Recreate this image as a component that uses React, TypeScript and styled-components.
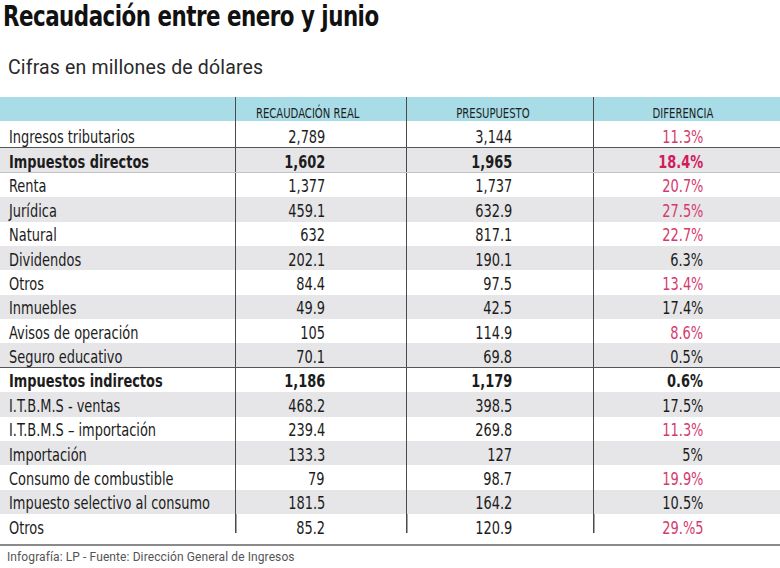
import React from "react";
import styled, { createGlobalStyle } from "styled-components";

const Global = createGlobalStyle`
  html, body { margin: 0; padding: 0; background: #fff; }
  body { width: 780px; height: 568px; overflow: hidden; }
`;

const COND = `"DejaVu Sans Condensed", "Liberation Sans Narrow", "Liberation Sans", sans-serif`;

const Page = styled.div`
  width: 780px;
  height: 568px;
  display: flex;
  flex-direction: column;
  background: #fff;
  color: #1c1c1c;
`;

const Title = styled.h1`
  margin: 0;
  padding: 1px 0 0 3px;
  height: 35px;
  box-sizing: border-box;
  font-family: ${COND};
  font-weight: 700;
  font-size: 28px;
  line-height: 32px;
  letter-spacing: -0.6px;
  color: #111;
  white-space: nowrap;
`;

const Squeeze = styled.span<{ $sx: number; $origin?: string }>`
  display: inline-block;
  white-space: nowrap;
  transform: scaleX(${(p) => p.$sx});
  transform-origin: ${(p) => p.$origin ?? "left"} center;
`;

const Subtitle = styled.div`
  padding: 0 0 0 8px;
  height: 62px;
  font-family: Roboto, "Liberation Sans", sans-serif;
  font-size: 19.5px;
  letter-spacing: 0.15px;
  line-height: 66px;
  color: #2a2a2a;
`;

const Table = styled.div`
  display: flex;
  flex-direction: column;
  font-family: ${COND};
`;

const cols = "235px 171px 187px 187px";

const HeadRow = styled.div`
  display: grid;
  grid-template-columns: ${cols};
  height: 27px;
  background: linear-gradient(#a8dce6, #a8dce6) left top / 100% 24px no-repeat;
`;

const HeadCell = styled.div<{ $first?: boolean; $shift?: number }>`
  border-left: ${(p) => (p.$first ? "none" : "1.5px solid #4a4a4a")};
  display: flex;
  align-items: flex-end;
  justify-content: center;
  padding-bottom: 3px;
  padding-right: ${(p) => (p.$shift ?? 0) * 2}px;
  font-size: 14px;
  line-height: 16px;
  color: #1e1e1e;
`;

const Row = styled.div<{ $shade?: boolean; $rule?: "dark" | "light" }>`
  display: grid;
  grid-template-columns: ${cols};
  height: 24.38px;
  box-sizing: border-box;
  background: ${(p) => (p.$shade ? "#e6e6e8" : "#fff")};
  border-bottom: ${(p) =>
    p.$rule === "dark" ? "1.5px solid #555" : p.$rule === "light" ? "1px solid #c2c2c2" : "none"};
`;

const Label = styled.div<{ $bold?: boolean }>`
  display: flex;
  align-items: center;
  padding: 3px 0 0 9px;
  font-size: 18px;
  line-height: 20px;
  font-weight: ${(p) => (p.$bold ? 700 : 400)};
  color: #1c1c1c;
`;

const Num = styled.div<{ $bold?: boolean; $pink?: boolean; $pad: number; $last?: boolean }>`
  border-left: ${(p) => (p.$last ? "none" : "1.5px solid #4a4a4a")};
  padding-left: ${(p) => (p.$last ? "1.5px" : "0")};
  background: ${(p) =>
    p.$last ? "linear-gradient(#4a4a4a, #4a4a4a) left top / 1.5px 19px no-repeat" : "none"};
  display: flex;
  align-items: center;
  justify-content: flex-end;
  padding-top: 3px;
  padding-right: ${(p) => p.$pad}px;
  font-size: 18px;
  line-height: 20px;
  font-weight: ${(p) => (p.$bold ? 700 : 400)};
  color: ${(p) => (p.$pink ? (p.$bold ? "#d01c5c" : "#d53a6e") : "#1c1c1c")};
`;

const BottomRule = styled.div`
  margin-top: 6px;
  height: 2px;
  background: #8a8a8a;
`;

const Footer = styled.div`
  padding: 3px 0 0 7px;
  font-family: Roboto, "Liberation Sans", sans-serif;
  font-size: 12px;
  letter-spacing: 0.1px;
  line-height: 16px;
  color: #555;
`;

type R = {
  label: string;
  real: string;
  pres: string;
  diff: string;
  pink?: boolean;
  bold?: boolean;
  rule?: "dark" | "light";
};

const rows: R[] = [
  { label: "Ingresos tributarios", real: "2,789", pres: "3,144", diff: "11.3%", pink: true, rule: "dark" },
  { label: "Impuestos directos", real: "1,602", pres: "1,965", diff: "18.4%", pink: true, bold: true, rule: "light" },
  { label: "Renta", real: "1,377", pres: "1,737", diff: "20.7%", pink: true },
  { label: "Jurídica", real: "459.1", pres: "632.9", diff: "27.5%", pink: true },
  { label: "Natural", real: "632", pres: "817.1", diff: "22.7%", pink: true },
  { label: "Dividendos", real: "202.1", pres: "190.1", diff: "6.3%" },
  { label: "Otros", real: "84.4", pres: "97.5", diff: "13.4%", pink: true },
  { label: "Inmuebles", real: "49.9", pres: "42.5", diff: "17.4%" },
  { label: "Avisos de operación", real: "105", pres: "114.9", diff: "8.6%", pink: true },
  { label: "Seguro educativo", real: "70.1", pres: "69.8", diff: "0.5%", rule: "dark" },
  { label: "Impuestos indirectos", real: "1,186", pres: "1,179", diff: "0.6%", bold: true },
  { label: "I.T.B.M.S - ventas", real: "468.2", pres: "398.5", diff: "17.5%" },
  { label: "I.T.B.M.S – importación", real: "239.4", pres: "269.8", diff: "11.3%", pink: true },
  { label: "Importación", real: "133.3", pres: "127", diff: "5%" },
  { label: "Consumo de combustible", real: "79", pres: "98.7", diff: "19.9%", pink: true },
  { label: "Impuesto selectivo al consumo", real: "181.5", pres: "164.2", diff: "10.5%" },
  { label: "Otros", real: "85.2", pres: "120.9", diff: "29.%5", pink: true },
];

const SX = 0.8;

export default function App() {
  return (
    <Page>
      <Global />
      <Title>
        <Squeeze $sx={0.85}>Recaudación entre enero y junio</Squeeze>
      </Title>
      <Subtitle>Cifras en millones de dólares</Subtitle>
      <Table>
        <HeadRow>
          <HeadCell $first />
          <HeadCell $shift={13}>
            <Squeeze $sx={0.8} $origin="center">RECAUDACIÓN REAL</Squeeze>
          </HeadCell>
          <HeadCell $shift={7.5}>
            <Squeeze $sx={0.8} $origin="center">PRESUPUESTO</Squeeze>
          </HeadCell>
          <HeadCell $shift={4}>
            <Squeeze $sx={0.8} $origin="center">DIFERENCIA</Squeeze>
          </HeadCell>
        </HeadRow>
        {rows.map((r, i) => {
          const last = i === rows.length - 1;
          return (
            <Row key={i} $shade={i % 2 === 1} $rule={r.rule}>
              <Label $bold={r.bold}>
                <Squeeze $sx={SX}>{r.label}</Squeeze>
              </Label>
              <Num $bold={r.bold} $pad={81} $last={last}>
                <Squeeze $sx={SX} $origin="right">{r.real}</Squeeze>
              </Num>
              <Num $bold={r.bold} $pad={81} $last={last}>
                <Squeeze $sx={SX} $origin="right">{r.pres}</Squeeze>
              </Num>
              <Num $bold={r.bold} $pink={r.pink} $pad={77} $last={last}>
                <Squeeze $sx={SX} $origin="right">{r.diff}</Squeeze>
              </Num>
            </Row>
          );
        })}
      </Table>
      <BottomRule />
      <Footer>Infografía: LP - Fuente: Dirección General de Ingresos</Footer>
    </Page>
  );
}
